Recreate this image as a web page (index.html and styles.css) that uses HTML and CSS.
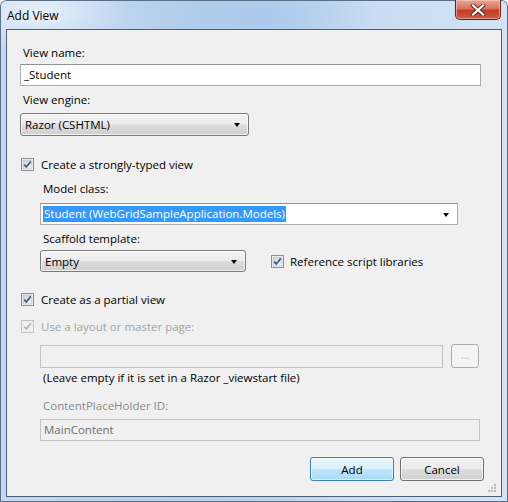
FILE: index.html
```html
<!DOCTYPE html>
<html>
<head>
<meta charset="utf-8">
<title>Add View</title>
<link rel="stylesheet" href="styles.css">
</head>
<body>
<div class="window">
  <div class="titlebar">
    <span class="title">Add View</span>
    <div class="close">
      <svg width="16" height="12" viewBox="0 0 16 12">
        <path d="M3 1.5 L13 10.5 M13 1.5 L3 10.5" stroke="#5a2a20" stroke-width="4" stroke-linecap="square"/>
        <path d="M3 1.5 L13 10.5 M13 1.5 L3 10.5" stroke="#ffffff" stroke-width="2.2" stroke-linecap="square"/>
      </svg>
    </div>
  </div>
  <div class="client">
    <div class="lbl m15">View name:</div>
    <div class="textbox name">_Student</div>

    <div class="lbl m6">View engine:</div>
    <div class="combo engine"><span>Razor (CSHTML)</span><i class="arrow"></i></div>

    <div class="check m20">
      <svg class="cb" width="13" height="13" viewBox="0 0 13 13"><use href="#cbox"/></svg>
      <span>Create a strongly-typed view</span>
    </div>

    <div class="group">
      <div class="lbl m9">Model class:</div>
      <div class="textbox model"><span class="sel">Student (WebGridSampleApplication.Models)</span><i class="arrow"></i></div>

      <div class="lbl m6">Scaffold template:</div>
      <div class="row scaffold">
        <div class="combo tmpl"><span>Empty</span><i class="arrow"></i></div>
        <div class="check ref">
          <svg class="cb" width="13" height="13" viewBox="0 0 13 13"><use href="#cbox"/></svg>
          <span>Reference script libraries</span>
        </div>
      </div>
    </div>

    <div class="check m19">
      <svg class="cb" width="13" height="13" viewBox="0 0 13 13"><use href="#cbox"/></svg>
      <span>Create as a partial view</span>
    </div>
    <div class="check m11 disabled">
      <svg class="cb" width="13" height="13" viewBox="0 0 13 13"><use href="#cbox-off"/></svg>
      <span>Use a layout or master page:</span>
    </div>

    <div class="group">
      <div class="row master">
        <div class="textbox off layout"></div>
        <div class="browse">...</div>
      </div>
      <div class="note">(Leave empty if it is set in a Razor _viewstart file)</div>
      <div class="lbl m12 gray">ContentPlaceHolder ID:</div>
      <div class="textbox off placeholder">MainContent</div>
    </div>

    <div class="buttons">
      <div class="btn default">Add</div>
      <div class="btn">Cancel</div>
    </div>
    <svg class="grip" width="9" height="9" viewBox="0 0 9 9">
      <g fill="#b9b9b9">
        <rect x="6" y="0" width="2" height="2"/>
        <rect x="3" y="3" width="2" height="2"/><rect x="6" y="3" width="2" height="2"/>
        <rect x="0" y="6" width="2" height="2"/><rect x="3" y="6" width="2" height="2"/><rect x="6" y="6" width="2" height="2"/>
      </g>
    </svg>
  </div>
</div>

<svg width="0" height="0" class="defs">
  <defs>
    <linearGradient id="cbg" x1="0" y1="0" x2="1" y2="1">
      <stop offset="0" stop-color="#cbcfd5"/>
      <stop offset="1" stop-color="#f6f6f6"/>
    </linearGradient>
    <g id="cbox">
      <rect x="0.5" y="0.5" width="12" height="12" fill="#ffffff" stroke="#8e8f8f"/>
      <rect x="2" y="2" width="9" height="9" fill="url(#cbg)" stroke="#aeb3b9" stroke-width="0.6"/>
      <path d="M3.2 6.6 L5.3 9 L9.8 3.4" fill="none" stroke="#3e5a8a" stroke-width="1.7"/>
    </g>
    <g id="cbox-off">
      <rect x="0.5" y="0.5" width="12" height="12" fill="#f4f4f4" stroke="#c2c2c2"/>
      <rect x="2" y="2" width="9" height="9" fill="#f4f4f4" stroke="#dcdcdc" stroke-width="0.6"/>
      <path d="M3.2 6.6 L5.3 9 L9.8 3.4" fill="none" stroke="#b4b4b4" stroke-width="1.7"/>
    </g>
  </defs>
</svg>
</body>
</html>
```

FILE: styles.css
```css
html, body {
  margin: 0;
  padding: 0;
  width: 508px;
  height: 502px;
  overflow: hidden;
}

body {
  font-family: "Open Sans", "Noto Sans", sans-serif;
  font-size: 11.5px;
  color: #000;
}

.defs {
  position: absolute;
  width: 0;
  height: 0;
}

.window {
  width: 508px;
  height: 502px;
  box-sizing: border-box;
  background:
    radial-gradient(ellipse 120px 60px at 260px 18px, rgba(170, 200, 235, 0.9), rgba(170, 200, 235, 0) 100%),
    radial-gradient(ellipse 90px 40px at 40px 12px, rgba(235, 243, 252, 0.9), rgba(235, 243, 252, 0) 100%),
    linear-gradient(90deg, #c4daf1 0%, #b5cfed 40%, #c8dcf2 70%, #d3e3f4 100%);
  border-radius: 6px 6px 0 0;
  box-shadow: inset 0 0 0 1px #5b6f86;
  display: flex;
  flex-direction: column;
}

.titlebar {
  height: 29px;
  display: flex;
  justify-content: space-between;
  align-items: flex-start;
  padding: 0 7px;
  flex: none;
}

.title {
  margin-top: 7px;
  font-size: 12px;
  color: #000;
  text-shadow: 0 0 8px rgba(255, 255, 255, 0.9);
}

.close {
  width: 46px;
  height: 20px;
  box-sizing: border-box;
  border: 1px solid #5e2217;
  border-top: none;
  border-radius: 0 0 5px 5px;
  background: linear-gradient(#e9a895 0%, #d9725c 45%, #c23d22 55%, #cf5b3f 100%);
  box-shadow: inset 0 0 0 1px rgba(255, 210, 200, 0.55);
  display: flex;
  align-items: center;
  justify-content: center;
}

.client {
  position: relative;
  margin: 0 6px 5px 6px;
  height: 468px;
  box-sizing: border-box;
  border: 1px solid #4d5e72;
  background: #f0f0f0;
  padding: 0 13px;
}

.lbl {
  height: 16px;
  line-height: 16px;
  margin-left: 3px;
}

.m6 { margin-top: 6px; }
.m8 { margin-top: 8px; }
.m9 { margin-top: 9px; }
.m11 { margin-top: 11px; }
.m12 { margin-top: 12px; }
.m15 { margin-top: 15px; }
.m19 { margin-top: 19px; }
.m20 { margin-top: 20px; }

.gray { color: #8a8a8a; }

.textbox {
  box-sizing: border-box;
  height: 22px;
  border: 1px solid #abadb3;
  border-top-color: #8e9299;
  background: #fff;
  padding: 0 3px;
  line-height: 20px;
  display: flex;
  align-items: center;
}

.textbox.name {
  width: 461px;
  margin-top: 3px;
}

.combo {
  box-sizing: border-box;
  height: 23px;
  border: 1px solid #7a7a7a;
  border-radius: 3px;
  background: linear-gradient(#f3f3f3 0%, #ebebeb 48%, #dddddd 52%, #cfcfcf 100%);
  box-shadow: inset 0 0 0 1px rgba(255, 255, 255, 0.7);
  display: flex;
  align-items: center;
  justify-content: space-between;
  padding: 0 8px 0 4px;
}

.combo.engine {
  width: 229px;
  margin-top: 5px;
}

.arrow {
  width: 0;
  height: 0;
  border-left: 3.5px solid transparent;
  border-right: 3.5px solid transparent;
  border-top: 4px solid #000;
  margin-top: 1px;
}

.check {
  display: flex;
  align-items: center;
  height: 16px;
  gap: 7px;
  padding-left: 1px;
}

.check .cb {
  flex: none;
}

.check.disabled {
  color: #a3a3a3;
}

.group {
  padding-left: 20px;
}

.textbox.model {
  width: 418px;
  margin-top: 6px;
  justify-content: space-between;
  padding: 0 8px 0 2px;
}

.sel {
  background: #3399ff;
  color: #fff;
  line-height: 16px;
  padding: 0 1px;
}

.row {
  display: flex;
  align-items: center;
}

.scaffold {
  margin-top: 3px;
  height: 22px;
}

.combo.tmpl {
  width: 206px;
  height: 22px;
}

.check.ref {
  margin-left: 24px;
  gap: 6px;
}

.master {
  margin-top: 10px;
  gap: 8px;
}

.textbox.off {
  background: #f0f0f0;
  border-color: #c3c3c3;
  color: #6d6d6d;
}

.textbox.layout {
  width: 403px;
  height: 23px;
}

.browse {
  box-sizing: border-box;
  width: 28px;
  height: 24px;
  border: 1px solid #adadad;
  border-radius: 3px;
  background: #f4f4f4;
  color: #b0b0b0;
  display: flex;
  align-items: center;
  justify-content: center;
  font-size: 10px;
  padding-bottom: 2px;
}

.note {
  height: 16px;
  line-height: 16px;
  margin-top: 2px;
  margin-left: 3px;
}

.textbox.placeholder {
  width: 440px;
  margin-top: 5px;
}

.buttons {
  display: flex;
  justify-content: flex-end;
  gap: 6px;
  margin-top: 16px;
  padding-right: 4px;
}

.btn {
  box-sizing: border-box;
  width: 84px;
  height: 24px;
  border: 1px solid #707070;
  border-radius: 3px;
  background: linear-gradient(#f2f2f2 0%, #ebebeb 48%, #dddddd 52%, #cfcfcf 100%);
  box-shadow: inset 0 0 0 1px rgba(255, 255, 255, 0.75);
  display: flex;
  align-items: center;
  justify-content: center;
}

.btn.default {
  border-color: #3c7fb1;
  background: linear-gradient(#eaf6fd 0%, #d9f0fc 48%, #bee6fd 52%, #a7d9f5 100%);
  box-shadow: inset 0 0 0 1px rgba(255, 255, 255, 0.6);
}

.grip {
  position: absolute;
  right: 4px;
  bottom: 3px;
}
```
